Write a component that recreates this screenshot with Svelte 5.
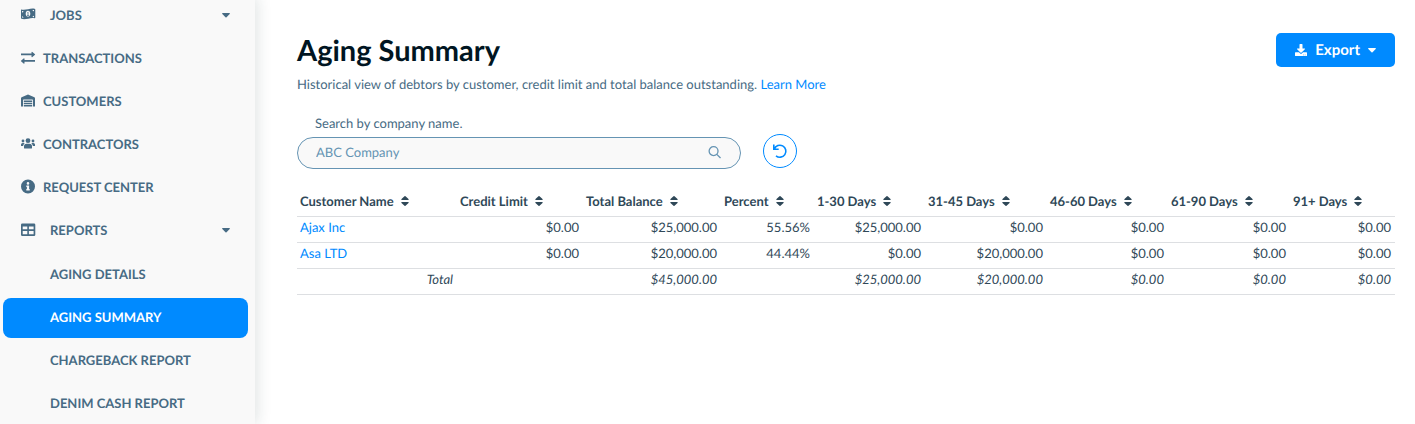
<script>
    let search = "";
    let sortKey = null;
    let ascending = true;

    const navItems = [
        { label: "Jobs", icon: "money", expandable: true },
        { label: "Transactions", icon: "exchange" },
        { label: "Customers", icon: "warehouse" },
        { label: "Contractors", icon: "users" },
        { label: "Request Center", icon: "info" },
        { label: "Reports", icon: "table", expandable: true },
        { label: "Aging Details", child: true },
        { label: "Aging Summary", child: true, active: true },
        { label: "Chargeback Report", child: true },
        { label: "Denim Cash Report", child: true },
    ];

    // width is the column's share of the table
    const columns = [
        { key: "name", label: "Customer Name", width: 160 },
        { key: "limit", label: "Credit Limit", width: 126 },
        { key: "balance", label: "Total Balance", width: 138 },
        { key: "percent", label: "Percent", width: 93 },
        { key: "d30", label: "1-30 Days", width: 111 },
        { key: "d45", label: "31-45 Days", width: 122 },
        { key: "d60", label: "46-60 Days", width: 121 },
        { key: "d90", label: "61-90 Days", width: 122 },
        { key: "d91", label: "91+ Days", width: 105 },
    ];
    const totalWidth = columns.reduce((sum, c) => sum + c.width, 0);

    const customers = [
        { name: "Ajax Inc", limit: 0, balance: 25000, percent: 55.56, d30: 25000, d45: 0, d60: 0, d90: 0, d91: 0 },
        { name: "Asa LTD", limit: 0, balance: 20000, percent: 44.44, d30: 0, d45: 20000, d60: 0, d90: 0, d91: 0 },
    ];

    $: rows = customers
        .filter((c) => c.name.toLowerCase().includes(search.toLowerCase()))
        .sort((a, b) => {
            if (!sortKey || a[sortKey] === b[sortKey]) return 0;
            return a[sortKey] > b[sortKey] === ascending ? 1 : -1;
        });

    function format(key, value) {
        if (key === "percent") return value.toFixed(2) + "%";
        return "$" + value.toLocaleString("en-US", { minimumFractionDigits: 2 });
    }

    function total(key) {
        if (key === "limit" || key === "percent") return "";
        return format(key, customers.reduce((sum, c) => sum + c[key], 0));
    }

    function sortBy(key) {
        ascending = sortKey === key ? !ascending : true;
        sortKey = key;
    }

    function reset() {
        search = "";
        sortKey = null;
    }
</script>

<div class="page">
    <nav class="sidebar" aria-label="Main">
        {#each navItems as item}
            <a
                href="#{item.label.toLowerCase().replaceAll(' ', '-')}"
                class="nav-item"
                class:child={item.child}
                class:expandable={item.expandable}
                class:active={item.active}
                aria-current={item.active ? "page" : undefined}
            >
                {#if item.icon}
                    <svg class="nav-icon" viewBox="0 0 16 16" aria-hidden="true">
                        {#if item.icon === "money"}
                            <path fill-rule="evenodd" d="M1 2.400C5.500 4 9.500 .8 14.500 1.700Q15.300 1.900 15.300 2.400V10.600Q15.300 11.300 14.300 11.200C10 10.200 5.500 13.400 1.500 11.800Q1 11.600 1 11V2.400ZM8 3.800C6.600 3.800 5.700 5.100 5.700 6.700S6.600 9.600 8 9.600 10.300 8.300 10.300 6.700 9.400 3.800 8 3.800ZM2 4.100V5.400Q3.300 5.400 3.500 4.200ZM14 2.900H12.500Q12.700 4.200 14 4.300ZM2 9.200V10.600L3.500 10.700Q3.300 9.300 2 9.200ZM14 8.800Q12.600 8.900 12.500 10.100L14 10.200Z" />
                            <path d="M7.200 5.300L8.400 4.700V8H9V8.700H7V8H7.600V5.700Z" />
                        {:else if item.icon === "exchange"}
                            <path d="M1 3.500H11.500V2.300Q11.700 1.500 12.400 2L15 4.200Q15.200 4.500 15 4.800L12.400 7Q11.700 7.500 11.500 6.700V5.300H1ZM15 11.800H4.500V13.200Q4.300 14 3.600 13.500L1 11.300Q.8 11 1 10.700L3.600 8.500Q4.300 8 4.500 8.800V10H15Z" />
                        {:else if item.icon === "warehouse"}
                            <path d="M8 1.500L14.400 4.200Q15 4.500 15 5.100V13.500H13V7.200Q13 6.600 12.400 6.600H3.600Q3 6.600 3 7.200V13.500H1V5.100Q1 4.500 1.600 4.200ZM3.800 7.400H12.200V9H3.800ZM3.800 9.700H12.200V11.200H3.800ZM3.800 11.900H12.200V13.500H3.800Z" />
                        {:else if item.icon === "users"}
                            <circle cx="8" cy="4.700" r="2.400" />
                            <circle cx="3" cy="5" r="1.400" />
                            <circle cx="13" cy="5" r="1.400" />
                            <path d="M4 11.900V10.500Q4 7.800 6.600 7.800H9.400Q12 7.800 12 10.500V11.900Q12 12.600 11.300 12.600H4.700Q4 12.600 4 11.900ZM1 9.700V8.600Q1 7 2.600 7H3.600Q4.200 7 4.700 7.400Q3.300 8.300 3.100 9.900H1.300Q1 9.900 1 9.700ZM15 9.700V8.600Q15 7 13.400 7H12.400Q11.800 7 11.300 7.400Q12.700 8.300 12.900 9.900H14.700Q15 9.900 15 9.700Z" />
                        {:else if item.icon === "info"}
                            <path fill-rule="evenodd" d="M8 .5A7 7 0 1 0 8 14.500A7 7 0 1 0 8 .5ZM8 3.100A1.300 1.300 0 1 1 8 5.700A1.300 1.300 0 1 1 8 3.100ZM6.300 6.500H9.100V10H9.700V11.500H6.300V10H6.900V8H6.300Z" />
                        {:else}
                            <path fill-rule="evenodd" d="M2.300 1.500H14Q15.300 1.500 15.300 2.800V12.700Q15.300 14 14 14H2.300Q1 14 1 12.700V2.800Q1 1.500 2.300 1.500ZM2.700 4.500V7.300H7.300V4.500ZM8.900 4.500V7.300H13.600V4.500ZM2.700 8.900V12.200H7.300V8.900ZM8.900 8.900V12.200H13.600V8.900Z" />
                        {/if}
                    </svg>
                {/if}
                <span class="nav-label">{item.label}</span>
                {#if item.expandable}
                    <svg class="caret" viewBox="0 0 8 5" aria-hidden="true">
                        <path d="M.6 0H7.400Q8.200 .2 7.700 .9L4.500 4.200Q4 4.600 3.500 4.200L.3 .9Q-.2 .2 .6 0Z" />
                    </svg>
                {/if}
            </a>
        {/each}
    </nav>

    <main class="content">
        <header class="header">
            <div>
                <h1>Aging Summary</h1>
                <p class="description">
                    Historical view of debtors by customer, credit limit and total balance outstanding.
                    <a href="#learn-more">Learn More</a>
                </p>
            </div>
            <button class="export" type="button">
                <svg class="download" viewBox="0 0 512 512" aria-hidden="true">
                    <path d="M216 0h80c13.300 0 24 10.700 24 24v168h87.700c17.800 0 26.700 21.500 14.100 34.100L269.700 378.300c-7.500 7.500-19.800 7.500-27.300 0L90.100 226.100c-12.600-12.600-3.700-34.100 14.100-34.100H192V24c0-13.300 10.700-24 24-24zm296 376v112c0 13.300-10.700 24-24 24H24c-13.300 0-24-10.700-24-24V376c0-13.300 10.700-24 24-24h146.700l49 49c20.100 20.100 52.500 20.100 72.600 0l49-49H488c13.300 0 24 10.700 24 24zm-124 88c0-11-9-20-20-20s-20 9-20 20 9 20 20 20 20-9 20-20zm64 0c0-11-9-20-20-20s-20 9-20 20 9 20 20 20 20-9 20-20z" />
                </svg>
                Export
                <svg class="caret" viewBox="0 0 8 5" aria-hidden="true">
                    <path d="M.6 0H7.400Q8.200 .2 7.700 .9L4.500 4.200Q4 4.600 3.500 4.200L.3 .9Q-.2 .2 .6 0Z" />
                </svg>
            </button>
        </header>

        <div class="filters">
            <div class="field">
                <label for="company-search">Search by company name.</label>
                <div class="search-box">
                    <input id="company-search" type="text" placeholder="ABC Company" bind:value={search} />
                    <svg class="search-icon" viewBox="0 0 14 14" aria-hidden="true">
                        <circle cx="6" cy="5.500" r="4.800" />
                        <path d="M9.500 9L13.500 13" />
                    </svg>
                </div>
            </div>
            <button class="reset" type="button" aria-label="Reset" on:click={reset}>
                <svg viewBox="0 0 16 16" aria-hidden="true">
                    <path d="M1.800 1.500V6.300H6.700M2.300 6A6 6 0 1 1 4 12.800" />
                </svg>
            </button>
        </div>

        <table>
            <colgroup>
                {#each columns as col}
                    <col style="width: {(col.width / totalWidth) * 100}%" />
                {/each}
            </colgroup>
            <thead>
                <tr>
                    {#each columns as col}
                        <th scope="col">
                            <button class="sort" type="button" on:click={() => sortBy(col.key)}>
                                {col.label}
                                <svg viewBox="0 0 8 10" aria-hidden="true">
                                    <path d="M.8 4Q-.1 3.800 .5 3L3.500 .3Q4 -.1 4.500 .3L7.500 3Q8.100 3.800 7.200 4ZM.8 6H7.200Q8.100 6.200 7.500 7L4.500 9.700Q4 10.100 3.500 9.700L.5 7Q-.1 6.200 .8 6Z" />
                                </svg>
                            </button>
                        </th>
                    {/each}
                </tr>
            </thead>
            <tbody>
                {#each rows as row}
                    <tr>
                        <td class="name"><a href="#customer">{row.name}</a></td>
                        {#each columns.slice(1) as col}
                            <td>{format(col.key, row[col.key])}</td>
                        {/each}
                    </tr>
                {/each}
            </tbody>
            <tfoot>
                <tr>
                    <td>Total</td>
                    {#each columns.slice(1) as col}
                        <td>{total(col.key)}</td>
                    {/each}
                </tr>
            </tfoot>
        </table>
    </main>
</div>

<style>
    :global(body) {
        margin: 0;
        background: #fff;
    }

    .page {
        display: flex;
        min-height: 100vh;
        overflow: hidden;
        font-family: Lato, "Liberation Sans", sans-serif;
        font-size: 13px;
        line-height: 18px;
        text-rendering: geometricPrecision;
        color: #2f4858;
    }

    a {
        color: #008aff;
        text-decoration: none;
    }

    button,
    input {
        font: inherit;
        text-rendering: inherit;
    }

    svg {
        flex: none;
        fill: currentColor;
    }

    .sidebar {
        display: flex;
        flex-direction: column;
        flex: none;
        gap: 3px;
        box-sizing: border-box;
        width: 255px;
        margin-top: -3px;
        padding: 0 7px 0 3px;
        background: #f9f9f9;
        box-shadow: 2px 0 14px rgba(30, 60, 60, 0.14);
    }

    .nav-item {
        display: flex;
        align-items: center;
        gap: 7px;
        box-sizing: border-box;
        height: 40px;
        padding: 0 18px 4px 17px;
        border-radius: 8px;
        font-weight: 700;
        color: #476b84;
        text-transform: uppercase;
    }

    .nav-item.expandable {
        gap: 14px;
    }

    .nav-item.child {
        padding: 0 18px 2px 47px;
    }

    .nav-item.active {
        background: #008aff;
        color: #fff;
    }

    .nav-icon {
        width: 16px;
        height: 16px;
    }

    .nav-label {
        flex: 1;
    }

    .caret {
        width: 8px;
        height: 5px;
    }

    .content {
        flex: 1;
        min-width: 0;
        padding: 33px 20px 20px 42px;
    }

    .header {
        display: flex;
        align-items: flex-start;
        justify-content: space-between;
    }

    h1 {
        margin: 0;
        font-size: 29px;
        line-height: 36px;
        font-weight: 700;
        color: #001522;
    }

    .description {
        margin: 6px 0 0;
        color: #476b84;
    }

    .export {
        display: flex;
        align-items: center;
        gap: 8px;
        height: 34px;
        padding: 0 19px;
        border: 0;
        border-radius: 5px;
        background: #008aff;
        font-size: 15px;
        font-weight: 700;
        color: #fff;
    }

    .download {
        width: 12px;
        height: 12px;
    }

    .filters {
        display: flex;
        align-items: flex-end;
        gap: 22px;
        margin-top: 21px;
    }

    .field {
        flex: 0 1 444px;
    }

    label {
        display: block;
        margin: 0 0 5px 18px;
        color: #476b84;
    }

    .search-box {
        display: flex;
        align-items: center;
        box-sizing: border-box;
        height: 32px;
        padding: 0 19px 2px 18px;
        border: 1px solid #6594b3;
        border-radius: 16px;
        background: #f9f9f9;
        color: #6594b3;
    }

    input {
        flex: 1;
        min-width: 0;
        padding: 0;
        border: 0;
        outline: 0;
        background: none;
        color: #476b84;
    }

    input::placeholder {
        color: #6594b3;
        opacity: 1;
    }

    .search-icon {
        width: 13px;
        height: 13px;
        fill: none;
        stroke: currentColor;
        stroke-width: 1.4;
    }

    .reset {
        display: grid;
        place-items: center;
        width: 34px;
        height: 34px;
        margin-bottom: 1px;
        padding: 0;
        border: 1px solid #008aff;
        border-radius: 50%;
        background: #fff;
        color: #008aff;
    }

    .reset svg {
        width: 16px;
        height: 16px;
        fill: none;
        stroke: currentColor;
        stroke-width: 1.6;
    }

    table {
        width: 100%;
        margin-top: 20px;
        border-collapse: collapse;
        table-layout: fixed;
    }

    th,
    td {
        box-sizing: border-box;
        height: 26px;
        padding: 0 4px 4px 3px;
        border-bottom: 1px solid #dddfe2;
        text-align: right;
        white-space: nowrap;
    }

    th {
        height: 27px;
        padding-bottom: 2px;
    }

    th,
    .name {
        text-align: left;
    }

    tfoot {
        font-style: italic;
    }

    .sort {
        display: flex;
        align-items: center;
        gap: 7px;
        padding: 0;
        border: 0;
        background: none;
        font-weight: 700;
        color: inherit;
    }

    .sort svg {
        width: 8px;
        height: 10px;
    }

    button,
    .nav-item {
        cursor: pointer;
    }
</style>
